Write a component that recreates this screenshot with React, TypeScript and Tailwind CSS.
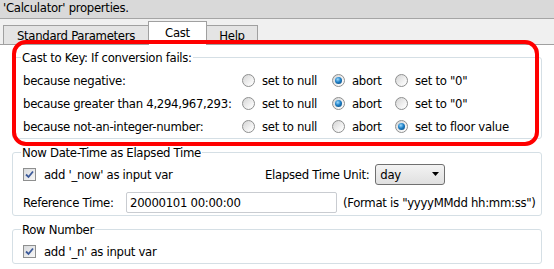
import React from 'react';

function Radio({ checked }: { checked?: boolean }) {
    return (
        <span className="flex h-[13px] w-[13px] shrink-0 items-center justify-center rounded-full border border-[#8e8f8f] bg-[linear-gradient(135deg,#d4d4d4,#f6f6f6_70%,#ffffff)]">
            {checked && (
                <span className="h-[7px] w-[7px] rounded-full bg-[radial-gradient(circle_at_40%_35%,#9fdcff,#1d7fc6_45%,#0a3f6e)]" />
            )}
        </span>
    );
}

function Option({ label, checked, width }: { label: string; checked?: boolean; width: string }) {
    return (
        <div className={`flex items-center gap-[7px] ${width}`}>
            <Radio checked={checked} />
            <span>{label}</span>
        </div>
    );
}

function Check({ label }: { label: string }) {
    return (
        <div className="flex items-center gap-[8px]">
            <span className="flex h-[13px] w-[13px] items-center justify-center border border-[#8e8f8f] bg-[linear-gradient(135deg,#d9dbdd,#f7f7f7)]">
                <svg width="9" height="9" viewBox="0 0 9 9">
                    <path d="M1 4.5 L3.5 7 L8 1.5" fill="none" stroke="#3c5a9a" strokeWidth="1.8" />
                </svg>
            </span>
            <span>{label}</span>
        </div>
    );
}

const rows = [
    { label: 'because negative:', picked: 1, last: 'set to "0"' },
    { label: 'because greater than 4,294,967,293:', picked: 1, last: 'set to "0"' },
    { label: 'because not-an-integer-number:', picked: 2, last: 'set to floor value' },
];

export default function App() {
    return (
        <div className="relative h-[269px] w-[554px] overflow-hidden bg-white text-[13px] leading-[15px] tracking-[-0.3px] text-black [font-family:'DejaVu_Sans_Condensed','DejaVu_Sans',sans-serif] font-stretch-condensed">
            <div className="h-[19px] border-b border-[#a5a5a5] bg-[#d9d9d9] pl-[3px] leading-[16px]">'Calculator' properties.</div>

            <div className="flex h-[26px] items-end border-b border-[#a0a0a0] bg-[#f0f0f0] pl-[3px]">
                <div className="flex h-[19px] w-[146px] items-center justify-center border border-b-0 border-[#a0a0a0] bg-[#e4e4e4] pt-[1px]">Standard Parameters</div>
                <div className="-mb-px -ml-px flex h-[24px] w-[59px] items-center justify-center border border-b-0 border-[#a0a0a0] bg-white pb-[2px]">Cast</div>
                <div className="-ml-px flex h-[19px] w-[52px] items-center justify-center border border-b-0 border-[#a0a0a0] bg-[#e4e4e4] pt-[1px]">Help</div>
            </div>

            <div className="flex flex-col px-[12px] pt-[5px]">
                <fieldset className="rounded-[3px] border border-[#d5dfe5] pl-[10px]">
                    <legend className="-ml-[2px] px-[1px]">Cast to Key: If conversion fails:</legend>
                    <div className="mt-[4px] flex flex-col">
                        {rows.map((r) => (
                            <div key={r.label} className="flex h-[23px] items-center">
                                <span className="w-[219px]">{r.label}</span>
                                <Option label="set to null" checked={r.picked === 0} width="w-[90px]" />
                                <Option label="abort" checked={r.picked === 1} width="w-[63px]" />
                                <Option label={r.last} checked={r.picked === 2} width="" />
                            </div>
                        ))}
                    </div>
                </fieldset>

                <fieldset className="mt-[6px] rounded-[3px] border border-[#d5dfe5] pl-[10px] pb-[1px]">
                    <legend className="-ml-[2px] px-[1px]">Now Date-Time as Elapsed Time</legend>
                    <div className="mt-[2px] flex h-[24px] items-center">
                        <div className="w-[242px]">
                            <Check label="add '_now' as input var" />
                        </div>
                        <span>Elapsed Time Unit:</span>
                        <div className="ml-[6px] flex h-[21px] w-[70px] items-center justify-between rounded-[3px] border border-[#707070] bg-[linear-gradient(#f3f3f3,#e0e0e0)] pl-[4px] pr-[5px]">
                            <span>day</span>
                            <svg width="7" height="4" viewBox="0 0 7 4">
                                <path d="M0 0 H7 L3.5 4 Z" fill="#000" />
                            </svg>
                        </div>
                    </div>
                    <div className="mt-[4px] flex h-[24px] items-center">
                        <span className="w-[103px]">Reference Time:</span>
                        <div className="flex h-[21px] w-[211px] items-center rounded-[2px] border border-[#c9ccd1] pl-[3px]">20000101 00:00:00</div>
                        <span className="ml-[6px]">(Format is "yyyyMMdd hh:mm:ss")</span>
                    </div>
                </fieldset>

                <fieldset className="mt-[6px] rounded-[3px] border border-[#d5dfe5] pl-[10px]">
                    <legend className="-ml-[2px] px-[1px]">Row Number</legend>
                    <div className="mt-[2px] flex h-[24px] items-center">
                        <Check label="add '_n' as input var" />
                    </div>
                </fieldset>
            </div>

            <div className="pointer-events-none absolute left-[12px] top-[40px] h-[106px] w-[527px] rounded-[14px] border-4 border-[#ff0000]" />
        </div>
    );
}
